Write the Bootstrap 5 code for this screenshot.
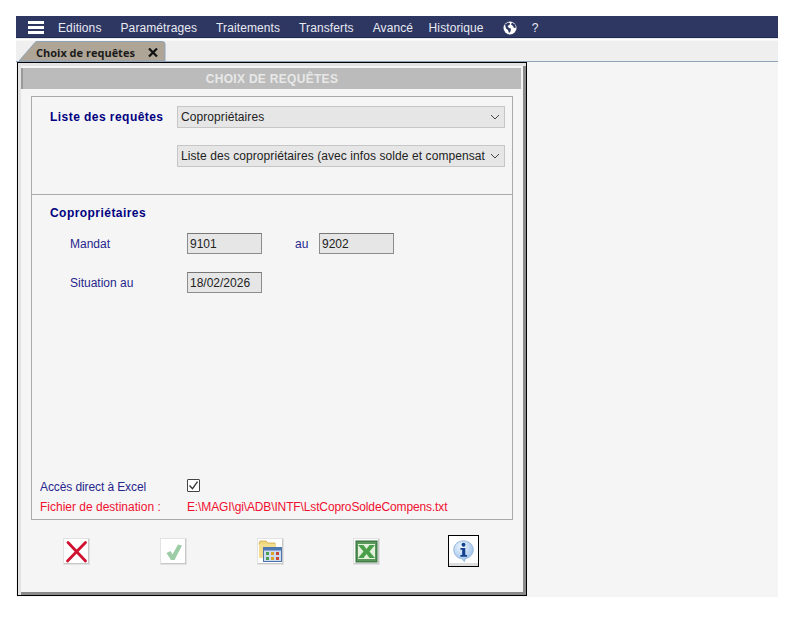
<!DOCTYPE html>
<html lang="fr">
<head>
<meta charset="utf-8">
<title>Choix de requêtes</title>
<link href="https://cdn.jsdelivr.net/npm/bootstrap@5.3.0/dist/css/bootstrap.min.css" rel="stylesheet">
<style>
html,body{background:#fff;height:617px;overflow:hidden}
body{font-family:"Liberation Sans",Arial,sans-serif;font-size:12px;color:#222}
.shell{width:762px;margin:16px 0 0 16px}
.topbar{height:22px;background:#2e3662;color:#e8eaf2;padding:2px 0 0 12px;gap:19px;border-bottom:1px solid #1f2a55}
.topbar a{color:#e8eaf2;text-decoration:none;font-size:12px;line-height:20px;letter-spacing:.1px}
.topbar a.tight{margin-right:-3.500px}
.burger{width:16px;height:13px;margin-right:-5px;border-top:3px solid #fff;border-bottom:3px solid #fff}
.burger::after{content:"";display:block;height:3px;background:#fff;margin-top:2px}
.qmark{margin-left:-4px}
.strip{height:24px;background:linear-gradient(#cfcfcf 0,#fff 1px,#fff 2px,#efefef 3px);border-bottom:1px solid #8ea3b8;padding-left:3px;align-items:flex-end}
.tabbox{position:relative;width:147px;height:20px;display:flex;align-items:center;padding:4px 0 0 17px;font-family:"Open Sans","Noto Sans",sans-serif;font-weight:700;font-size:11px;color:#1a1a1a;gap:13px}
.tabbox svg.tabshape{position:absolute;left:0;top:0;z-index:0}
.tabbox span,.closex{position:relative;z-index:1}
.closex{margin-top:-2px}
.workspace{height:535px;background:#f5f5f5;padding-left:1px}
.panel{width:510px;height:534px;border:1px solid #000;background:#f5f5f5;box-shadow:inset 3px 3px 0 #e3e3e3,inset -3px -3px 0 #8a8a8a;padding:5px 5px 0 3px}
.headbar{height:21px;background:#bbb;border-left:2px solid #999;color:#e8e8e8;font-weight:700;font-size:12px;letter-spacing:.3px;line-height:22px;text-align:center}
.boxa{margin:7px 8px 0 10px;height:99px;border:1px solid #aaa;padding:9px 7px 0 18px}
.boxb{margin:0 8px 0 10px;height:325px;border:1px solid #aaa;border-top:0;padding:9px 0 0 18px;display:flex;flex-direction:column}
.ttl{color:#000080;font-weight:700;font-size:12px;letter-spacing:.45px}
.lbl{color:#26268c;font-size:12px}
.rowa{height:22px;align-items:center}
.rowa .ttl{width:127px;flex:none}
.picker.form-select{flex:none;width:328px;height:22px;padding:0 19px 0 3px;border:1px solid #c6c6c6;border-radius:0;background-color:#e6e6e6;background-image:url("data:image/svg+xml,%3Csvg xmlns='http://www.w3.org/2000/svg' viewBox='0 0 10 6'%3E%3Cpath d='M1 1l4 4 4-4' fill='none' stroke='%23444' stroke-width='1'/%3E%3C/svg%3E");background-position:right 4px center;background-size:10px 6px;font-family:"Liberation Sans",sans-serif;font-size:12px;letter-spacing:.08px;color:#222;box-shadow:none}
.second{margin-top:17px;margin-left:127px}
.fieldrow{height:21px;align-items:center;padding-left:20px;flex:none}
.fieldrow .lbl:first-child{width:117px;flex:none}
.gapm{margin-top:11px}
.gaps{margin-top:18px}
.val.form-control{width:75px;height:21px;min-height:0;flex:none;padding:0 2px;border:1px solid #8c8c8c;border-top-color:#777;border-radius:0;background:#e6e6e6;font-family:"Liberation Sans",sans-serif;font-size:12px;letter-spacing:0;color:#222}
.au{width:24px;margin-left:33px;flex:none}
.foot{margin-top:auto;margin-left:-10px;padding-bottom:2px}
.footline{height:20px;align-items:center}
.footline>:first-child{width:147px;flex:none}
.lbl.acc{letter-spacing:-.1px}
.red{color:#f01030}
.pathv{letter-spacing:-.13px}
.tick.form-check-input{width:13px;height:13px;margin:-3px 0 0;border:1px solid #444;border-radius:1px;background-color:#fff;background-image:url("data:image/svg+xml,%3Csvg xmlns='http://www.w3.org/2000/svg' viewBox='0 0 13 13'%3E%3Cpath d='M2.500 6.500l3 3.200 5-7' fill='none' stroke='%23333' stroke-width='1.300'/%3E%3C/svg%3E");background-size:13px 13px;box-shadow:none}
.actions{margin-top:18px;height:32px;position:relative}
.ibtn.btn{position:absolute;top:0;width:27px;height:27px;padding:0;border:0;border-radius:0;background:#fff;box-shadow:inset 0 0 0 1px #e2e2e2,inset -1px -1px 0 1px #c8c8c8;display:flex;align-items:center;justify-content:center}
.b1{left:42px}.b2{left:139px}.b3{left:236px}.b4{left:332px}
.ibtn.b5{left:427px;top:-3px;width:31px;height:32px;border:1px solid #000;box-shadow:inset 0 -3px 0 #ddd}
</style>
</head>
<body>
<div class="shell">
  <nav class="topbar d-flex align-items-center">
    <span class="burger"></span>
    <a href="#">Editions</a><a href="#">Paramétrages</a><a href="#">Traitements</a><a href="#">Transferts</a><a href="#" class="tight">Avancé</a><a href="#">Historique</a>
    <svg width="14" height="14" viewBox="0 0 14 14"><circle cx="7" cy="7" r="6.500" fill="#fff"/><path d="M2 3.500l3-2 2 .5-.5 2-2 1 1.500 2 2 .5-.5 3-1.500 1.500-1-3-2-1.500zM9 1.500l3 2 1 3-2 .5-1-2-2-1.500z" fill="#2e3662"/></svg>
    <a href="#" class="qmark">?</a>
  </nav>
  <div class="strip d-flex">
    <div class="tabbox">
      <svg class="tabshape" width="147" height="20" viewBox="0 0 147 20"><path d="M0 20L16 1.500Q17 .5 18 .5H143Q146 .5 146 3V20Z" fill="#aea596" stroke="#8ea3b8"/></svg>
      <span>Choix de requêtes</span>
      <svg class="closex" width="10" height="9" viewBox="0 0 10 9"><path d="M1 .5L9 8.500M9 .5L1 8.500" stroke="#111" stroke-width="2.200"/></svg>
    </div>
  </div>
  <div class="workspace">
    <div class="panel">
      <div class="headbar">CHOIX DE REQUÊTES</div>
      <div class="boxa">
        <div class="rowa d-flex">
          <span class="ttl">Liste des requêtes</span>
          <select class="picker form-select"><option>Copropriétaires</option></select>
        </div>
        <select class="picker form-select second"><option>Liste des copropriétaires (avec infos solde et compensation)</option></select>
      </div>
      <div class="boxb">
        <div class="ttl">Copropriétaires</div>
        <div class="fieldrow d-flex gapm">
          <span class="lbl">Mandat</span>
          <input class="val form-control" value="9101">
          <span class="lbl au">au</span>
          <input class="val form-control" value="9202">
        </div>
        <div class="fieldrow d-flex gaps">
          <span class="lbl">Situation au</span>
          <input class="val form-control" value="18/02/2026">
        </div>
        <div class="foot">
          <div class="footline d-flex"><span class="lbl acc">Accès direct à Excel</span><input class="tick form-check-input" type="checkbox" checked></div>
          <div class="footline d-flex red"><span>Fichier de destination :</span><span class="pathv">E:\MAGI\gi\ADB\INTF\LstCoproSoldeCompens.txt</span></div>
        </div>
      </div>
      <div class="actions">
        <button class="ibtn btn b1" aria-label="Annuler"><svg width="23" height="23" viewBox="0 0 23 23"><path d="M3 2.500L20.500 21M20.500 2.500L2.500 21" stroke="#cf1230" stroke-width="2.800" stroke-linecap="round"/></svg></button>
        <button class="ibtn btn b2" aria-label="Valider"><svg width="20" height="20" viewBox="0 0 20 20"><path d="M2.500 11L6.500 9 8.500 12.500 14 2.500 18 3.500 10.500 18H7z" fill="#9ccca6"/></svg></button>
        <button class="ibtn btn b3" aria-label="Calendrier"><svg width="25" height="25" viewBox="0 0 25 25"><path d="M1 5L2 2h6l2 2h7v6H3z" fill="#efd87c" stroke="#c9a94c" stroke-width=".8"/><path d="M1 5v14h5V9h12V5z" fill="#f2de8e"/><rect x="5.500" y="8.500" width="18" height="14" fill="#cddcf0" stroke="#4f74a8"/><rect x="5.500" y="8.500" width="18" height="3" fill="#4f78b5"/><path d="M8 13h3v3H8zM8 18h3v3H8z" fill="#4a9d4a"/><path d="M13 13h3v3h-3zM13 18h3v3h-3z" fill="#d9a62a"/><path d="M18 13h3v3h-3zM18 18h3v3h-3z" fill="#c8483c"/></svg></button>
        <button class="ibtn btn b4" aria-label="Excel"><svg width="23" height="23" viewBox="0 0 23 23"><rect x="1" y="1" width="21" height="21" fill="#5a965a" stroke="#2d6a35"/><rect x="3" y="4" width="17" height="15" fill="#e2f0dc"/><path d="M3 5h5.500l3 4 3-4H20l-5.500 6.500L20 18h-5.500l-3-4-3 4H3l5.500-6.500z" fill="#4aa04a"/></svg></button>
        <button class="ibtn btn b5" aria-label="Info"><svg width="23" height="24" viewBox="0 0 26 27"><defs><radialGradient id="bub" cx=".4" cy=".3" r=".8"><stop offset="0" stop-color="#eef6fe"/><stop offset="1" stop-color="#8fb8e6"/></radialGradient></defs><path d="M13 2C6.500 2 2 6.300 2 12s4.500 10 9 10l3 3.500 1-3.500c5-.6 9-4.800 9-10S19.500 2 13 2z" fill="url(#bub)" stroke="#8fb3da"/><circle cx="13" cy="6.500" r="2.200" fill="#12408f"/><path d="M9.500 10h5.500v8h2v2H9.500v-2h2v-6h-2z" fill="#12408f"/></svg></button>
      </div>
    </div>
  </div>
</div>
</body>
</html>
